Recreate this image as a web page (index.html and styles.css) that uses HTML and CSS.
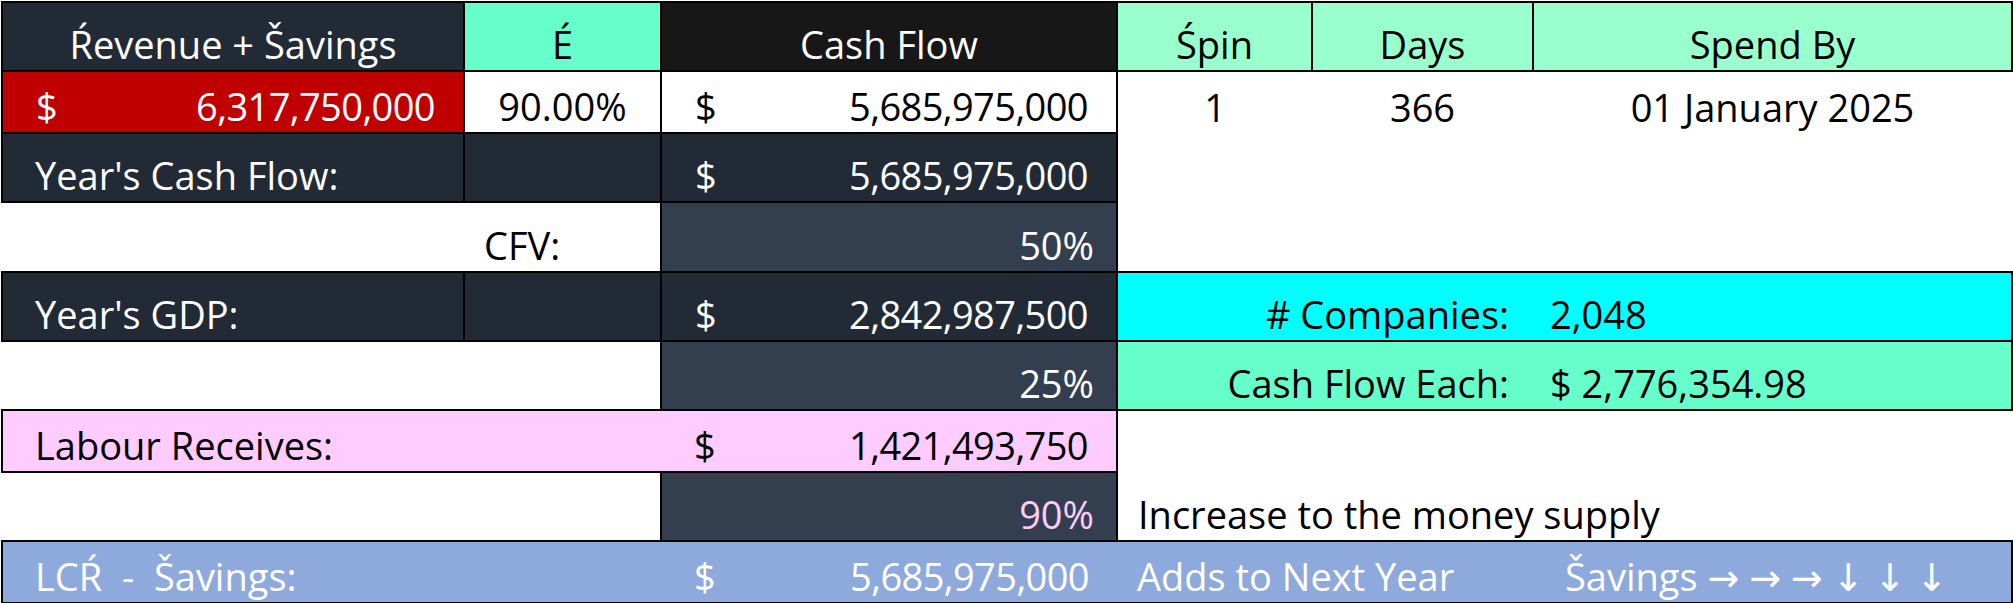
FILE: index.html
```html
<!DOCTYPE html>
<html lang="en">
<head>
<meta charset="utf-8">
<title>Cash Flow</title>
<link rel="stylesheet" href="styles.css">
</head>
<body>
<table class="sheet">
  <colgroup>
    <col class="c-a"><col class="c-b"><col class="c-c"><col class="c-d"><col class="c-e"><col class="c-f">
  </colgroup>
  <tbody>
    <tr class="r-tall">
      <td class="hd navy box">Ŕevenue + Šavings</td>
      <td class="hd aqua box">É</td>
      <td class="hd ink box">Cash Flow</td>
      <td class="hd mint box">Śpin</td>
      <td class="hd mint box">Days</td>
      <td class="hd mint box">Spend By</td>
    </tr>
    <tr class="r-short">
      <td class="red box acct-cell"><div class="acct"><span>$</span><span class="num">6,317,750,000</span></div></td>
      <td class="box center">90.00%</td>
      <td class="box acct-cell"><div class="acct"><span>$</span><span class="num">5,685,975,000</span></div></td>
      <td class="center">1</td>
      <td class="center">366</td>
      <td class="center">01 January 2025</td>
    </tr>
    <tr class="r-tall">
      <td class="navy box">Year's Cash Flow:</td>
      <td class="navy box"></td>
      <td class="navy box acct-cell"><div class="acct"><span>$</span><span class="num">5,685,975,000</span></div></td>
      <td colspan="3"></td>
    </tr>
    <tr class="r-taller">
      <td></td>
      <td class="pad-sm">CFV:</td>
      <td class="slate box pct">50%</td>
      <td colspan="3"></td>
    </tr>
    <tr class="r-tall">
      <td class="navy box">Year's GDP:</td>
      <td class="navy box"></td>
      <td class="navy box acct-cell"><div class="acct"><span>$</span><span class="num">2,842,987,500</span></div></td>
      <td colspan="2" class="cyan bt bb bl label-r">#&nbsp;Companies:</td>
      <td class="cyan bt bb br value-l">2,048</td>
    </tr>
    <tr class="r-tall">
      <td colspan="2"></td>
      <td class="slate box pct">25%</td>
      <td colspan="2" class="aqua bt bb bl label-r">Cash Flow Each:</td>
      <td class="aqua bt bb br value-l">$ 2,776,354.98</td>
    </tr>
    <tr class="r-short">
      <td colspan="2" class="pink bt bb bl">Labour Receives:</td>
      <td class="pink bt bb br acct-cell"><div class="acct"><span>$</span><span class="num">1,421,493,750</span></div></td>
      <td colspan="3"></td>
    </tr>
    <tr class="r-tall">
      <td colspan="2"></td>
      <td class="slate box pct pink-text">90%</td>
      <td colspan="3" class="pad-sm">Increase to the money supply</td>
    </tr>
    <tr class="r-short">
      <td colspan="2" class="blue bt bb bl keep">LCŔ  -  Šavings:</td>
      <td class="blue bt bb acct-cell"><div class="acct"><span>$</span><span class="num">5,685,975,000</span></div></td>
      <td colspan="2" class="blue bt bb pad-sm">Adds to Next Year</td>
      <td class="blue bt bb br">Šavings → → → ↓ ↓ ↓</td>
    </tr>
  </tbody>
</table>
</body>
</html>
```

FILE: styles.css
```css
html, body {
  margin: 0;
  padding: 0;
  background: #ffffff;
}

body {
  padding: 1px 0 0 1px;
}

.sheet {
  border-collapse: collapse;
  table-layout: fixed;
  width: 2010px;
  font-family: "Open Sans", "Noto Sans", "DejaVu Sans", sans-serif;
  font-size: 38px;
  color: #000000;
}

.c-a { width: 462px; }
.c-b { width: 197px; }
.c-c { width: 456px; }
.c-d { width: 195px; }
.c-e { width: 221px; }
.c-f { width: 479px; }

.r-tall { height: 69px; }
.r-taller { height: 70px; }
.r-short { height: 62px; }

.sheet td {
  padding: 0 0 1px 32px;
  vertical-align: bottom;
  white-space: nowrap;
  overflow: hidden;
  line-height: 50px;
}

.sheet td.keep { white-space: pre; }

/* borders */
.box { border: 2px solid #000000; }
.bt { border-top: 2px solid #000000; }
.bb { border-bottom: 2px solid #000000; }
.bl { border-left: 2px solid #000000; }
.br { border-right: 2px solid #000000; }

/* fills */
.navy { background: #222a35; color: #ffffff; }
.ink { background: #171717; color: #ffffff; }
.slate { background: #333f4f; color: #ffffff; }
.red { background: #c00000; color: #ffffff; }
.aqua { background: #66ffcc; }
.mint { background: #99ffcc; }
.cyan { background: #00ffff; }
.pink { background: #ffccff; }
.blue { background: #8ea9db; color: #ffffff; }
.pink-text { color: #ffccff; }

/* alignment */
.sheet td.hd,
.sheet td.center {
  text-align: center;
  padding-left: 0;
}

.sheet td.pct {
  text-align: right;
  padding-right: 22px;
}

.sheet td.acct-cell {
  padding-left: 33px;
}

.acct {
  display: flex;
  justify-content: space-between;
}

.num {
  padding-right: 28px;
  letter-spacing: -0.6px;
}

.sheet td.pad-sm {
  padding-left: 20px;
}

.sheet td.label-r {
  text-align: right;
  padding-right: 24px;
}

.sheet td.value-l {
  padding-left: 17px;
}
```
